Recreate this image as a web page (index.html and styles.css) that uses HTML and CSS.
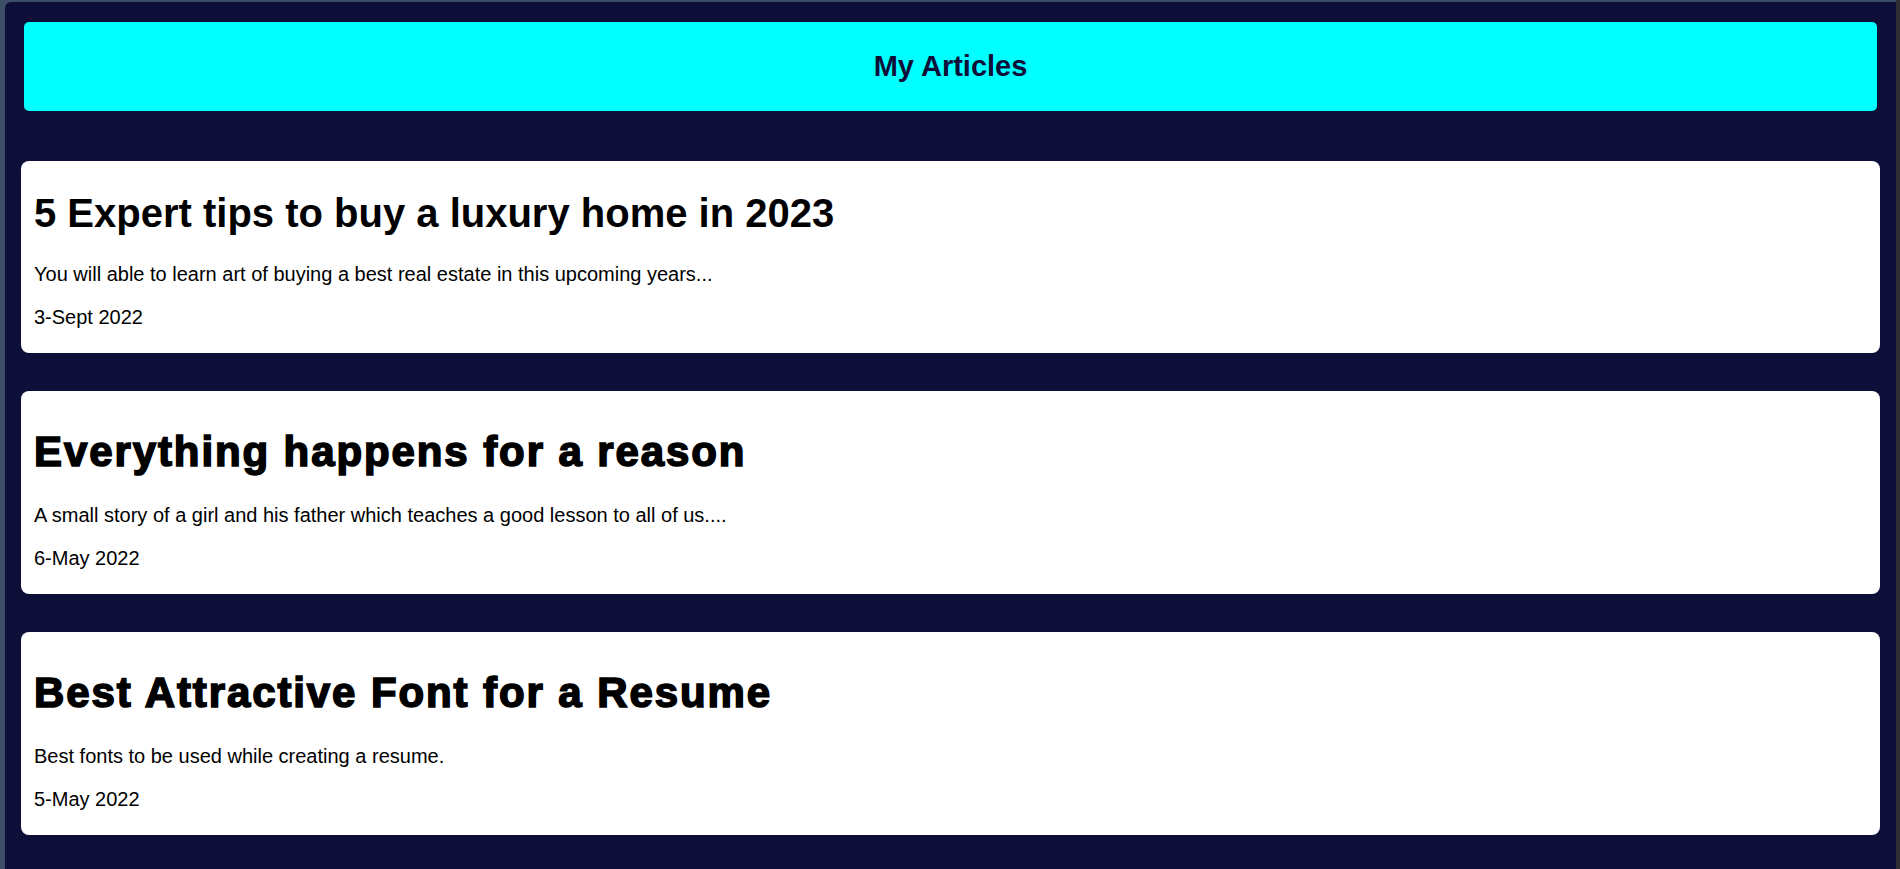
FILE: index.html
```html
<!DOCTYPE html>
<html lang="en">
<head>
<meta charset="utf-8">
<title>My Articles</title>
<link rel="stylesheet" href="styles.css">
</head>
<body>
<div class="frame">
  <main class="page">
    <header class="banner">
      <h2 class="banner-title">My Articles</h2>
    </header>
    <section class="articles">
      <article class="card">
        <h1 class="card-title">5 Expert tips to buy a luxury home in 2023</h1>
        <p class="card-text">You will able to learn art of buying a best real estate in this upcoming years...</p>
        <p class="card-text">3-Sept 2022</p>
      </article>
      <article class="card">
        <h1 class="card-title heavy">Everything happens for a reason</h1>
        <p class="card-text">A small story of a girl and his father which teaches a good lesson to all of us....</p>
        <p class="card-text">6-May 2022</p>
      </article>
      <article class="card">
        <h1 class="card-title heavy">Best Attractive Font for a Resume</h1>
        <p class="card-text">Best fonts to be used while creating a resume.</p>
        <p class="card-text">5-May 2022</p>
      </article>
    </section>
  </main>
  <div class="scroll-strip"></div>
</div>
</body>
</html>
```
FILE: styles.css
```css
* {
  box-sizing: border-box;
}

html, body {
  margin: 0;
  padding: 0;
  height: 100%;
}

body {
  background: #3d4f66;
  font-family: "Liberation Sans", Arial, sans-serif;
  overflow: hidden;
}

.frame {
  display: flex;
  height: 100%;
  padding-top: 2px;
  padding-left: 5px;
}

.page {
  flex: 1;
  background: #0d0f38;
  border-top-left-radius: 6px;
  padding: 20px 16px 0;
  min-height: 0;
}

.scroll-strip {
  width: 4px;
  margin-top: -2px;
  background: #2f2f33;
}

.banner {
  margin: 0 3px;
  height: 89px;
  background: #00ffff;
  border-radius: 5px;
  display: flex;
  align-items: center;
  justify-content: center;
}

.banner-title {
  margin: 0;
  font-size: 29px;
  font-weight: bold;
  color: #0d0f38;
  line-height: 1;
}

.articles {
  display: flex;
  flex-direction: column;
  gap: 38px;
  margin-top: 50px;
}

.card {
  background: #ffffff;
  border-radius: 8px;
  padding: 2px 13px 4px;
  color: #000;
}

.card-title {
  margin: 26.8px 0;
  font-size: 40px;
  line-height: 46px;
  font-weight: bold;
}

.card-title.heavy {
  font-size: 42px;
  line-height: 56px;
  margin: 31px 0 24.4px;
  letter-spacing: 1.9px;
  -webkit-text-stroke: 1.6px #000;
}

.card-text {
  margin: 20px 0;
  font-size: 20px;
  line-height: 23px;
}
```
